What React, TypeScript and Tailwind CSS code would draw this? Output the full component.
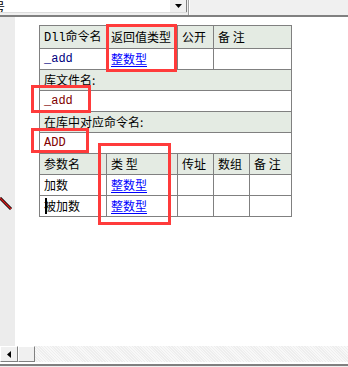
import React from 'react';

const cjk = "font-['SimSun','Noto_Sans_CJK_SC',sans-serif]";
const mono = "font-['Liberation_Mono','Noto_Sans_CJK_SC',monospace]";

const cell = 'border border-[#808080] h-[21px] px-[4px] py-0 text-[12px] leading-[20px] text-left align-middle whitespace-nowrap';
const head = `${cell} bg-[#e4ebe3] text-black font-normal`;
const body = `${cell} bg-white`;

const TypeLink: React.FC = () => (
  <span className="text-[#0000ff] underline underline-offset-2">整数型</span>
);

// red markers drawn over the grid
const Mark: React.FC<{ className: string }> = ({ className }) => (
  <div className={`absolute border-[3px] border-[#ff3b3b] pointer-events-none ${className}`} />
);

const DllTable: React.FC = () => (
  <div className={`${cjk} ml-[24px] mt-[8px] w-[252px]`}>
    <table className="border-collapse table-fixed w-[252px]">
      <colgroup>
        <col className="w-[67px]" />
        <col className="w-[71px]" />
        <col className="w-[36px]" />
        <col className="w-[78px]" />
      </colgroup>
      <tbody>
        <tr>
          <th className={head}>
            <span className={mono}>Dll</span>命令名
          </th>
          <th className={head}>返回值类型</th>
          <th className={head}>公开</th>
          <th className={head}>备 注</th>
        </tr>
        <tr>
          <td className={`${body} ${mono} text-[#000080]`}>_add</td>
          <td className={body}><TypeLink /></td>
          <td className={body}></td>
          <td className={body}></td>
        </tr>
        <tr>
          <td colSpan={4} className={head}>库文件名:</td>
        </tr>
        <tr>
          <td colSpan={4} className={`${body} ${mono} text-[#800000]`}>_add</td>
        </tr>
        <tr>
          <td colSpan={4} className={head}>在库中对应命令名:</td>
        </tr>
        <tr>
          <td colSpan={4} className={`${body} ${mono} text-[#800000]`}>ADD</td>
        </tr>
      </tbody>
    </table>
    <table className="border-collapse table-fixed w-[252px] -mt-px">
      <colgroup>
        <col className="w-[67px]" />
        <col className="w-[71px]" />
        <col className="w-[36px]" />
        <col className="w-[36px]" />
        <col className="w-[42px]" />
      </colgroup>
      <tbody>
        <tr>
          <th className={head}>参数名</th>
          <th className={head}>类 型</th>
          <th className={head}>传址</th>
          <th className={head}>数组</th>
          <th className={head}>备 注</th>
        </tr>
        <tr>
          <td className={`${body} text-black`}>加数</td>
          <td className={body}><TypeLink /></td>
          <td className={body}></td>
          <td className={body}></td>
          <td className={body}></td>
        </tr>
        <tr>
          <td className={`${body} text-black relative`}>
            <span className="absolute left-[5px] top-[2px] w-[2px] h-[16px] bg-black" />
            被加数
          </td>
          <td className={body}><TypeLink /></td>
          <td className={body}></td>
          <td className={body}></td>
          <td className={body}></td>
        </tr>
      </tbody>
    </table>
  </div>
);

const Pencil: React.FC = () => (
  <svg width="13" height="14" viewBox="0 0 13 14" className="block">
    <path d="M0 1 L11 12" stroke="#000" strokeWidth="3" />
    <path d="M0 1 L11 12" stroke="#d81c1c" strokeWidth="1.4" />
  </svg>
);

const App: React.FC = () => {
  return (
    <div className={`${cjk} w-[348px] h-[367px] bg-white flex flex-col overflow-hidden`}>
      {/* toolbar with the command combo box */}
      <div className="h-[17px] flex bg-[#f0f0f0] border-b-2 border-[#808080] shrink-0">
        <div className="w-[187px] h-[13px] bg-white flex border-b border-[#dcdcdc] overflow-hidden">
          <span className="flex-1 text-[12px] leading-[13px] -ml-[7px] text-black">号</span>
          <div className="w-[17px] h-[13px] bg-[#f0f0f0] border-r border-b border-[#808080] flex items-center justify-center">
            <svg width="7" height="4" viewBox="0 0 7 4">
              <path d="M0 0 H7 L3.5 4 Z" fill="#000" />
            </svg>
          </div>
        </div>
        <div className="w-[2px] ml-[1px] h-[15px] border-l border-[#a0a0a0] border-r border-r-white" />
      </div>

      <div className="flex flex-1 min-h-0">
        <div className="w-[15px] bg-[#ececec] flex flex-col pt-[180px]">
          <Pencil />
        </div>
        <div className="flex-1 relative bg-white">
          <DllTable />
          <Mark className="left-[91px] top-[7px] w-[71px] h-[48px]" />
          <Mark className="left-[16px] top-[68px] w-[60px] h-[28px]" />
          <Mark className="left-[16px] top-[111px] w-[58px] h-[25px]" />
          <Mark className="left-[83px] top-[126px] w-[73px] h-[82px]" />
        </div>
      </div>

      {/* horizontal scroll bar */}
      <div className="h-[16px] flex shrink-0 bg-[repeating-linear-gradient(45deg,#eeeeee_0px,#eeeeee_1px,#f8f8f8_1px,#f8f8f8_2px)]">
        <div className="w-[18px] h-[16px] bg-[#f0f0f0] border border-[#808080] border-t-white border-l-white flex items-center justify-center">
          <svg width="4" height="7" viewBox="0 0 4 7">
            <path d="M4 0 V7 L0 3.5 Z" fill="#000" />
          </svg>
        </div>
        <div className="w-[17px] h-[16px] bg-[#f0f0f0] border border-[#808080] border-t-white border-l-white" />
      </div>
      <div className="h-[2px] bg-white shrink-0" />
      <div className="h-[2px] bg-[#808080] shrink-0" />
      <div className="h-[1px] bg-[#f0f0f0] shrink-0" />
    </div>
  );
};

export default App;
